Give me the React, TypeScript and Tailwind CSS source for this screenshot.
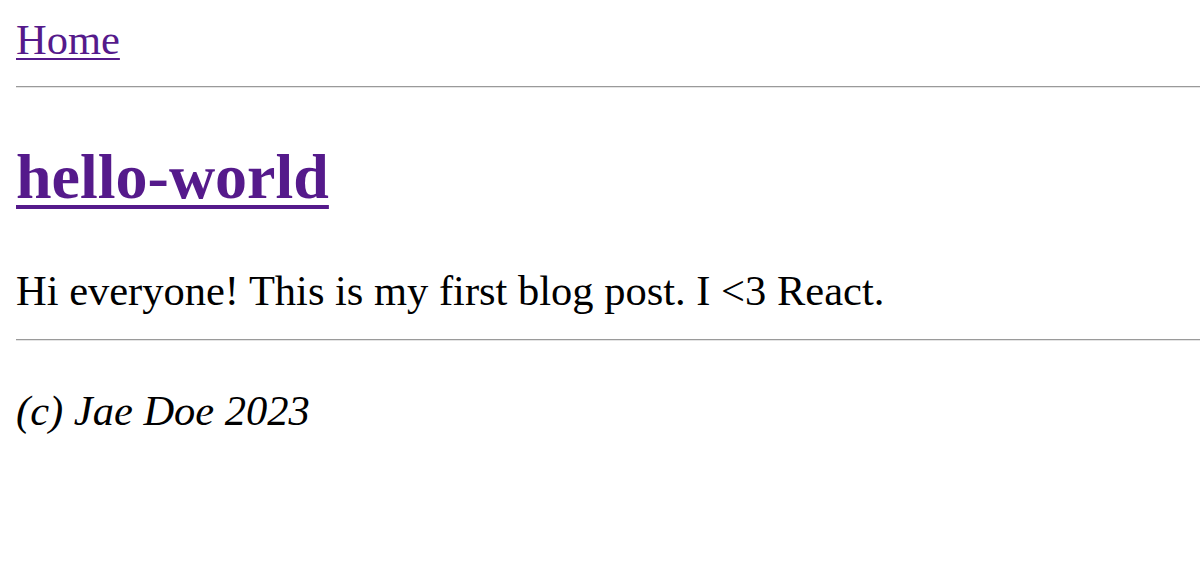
import React from 'react';

const Rule: React.FC<{ className?: string }> = ({ className = '' }) => (
  <hr className={`h-0 border-0 border-t border-b border-t-[#9a9a9a] border-b-[#e4e4e4] ${className}`} />
);

const App: React.FC = () => {
  return (
    <div className="min-h-[578px] bg-white pt-[15px] pl-4 font-['Liberation_Serif','Times_New_Roman',serif] text-black">
      <nav className="text-[42.5px] leading-[49px]">
        <a href="#" className="text-[#551a8b] underline decoration-2 underline-offset-[4px]">Home</a>
      </nav>
      <Rule className="mt-[22px]" />
      <main>
        <h1 className="mt-[52px] text-[64px] leading-[74px] font-bold">
          <a href="#" className="text-[#551a8b] underline decoration-4 underline-offset-[7px]">hello-world</a>
        </h1>
        <p className="mt-[52px] text-[42.5px] leading-[49px]">Hi everyone! This is my first blog post. I &lt;3 React.</p>
      </main>
      <Rule className="mt-[24px]" />
      <footer className="mt-[45px] text-[42.5px] leading-[49px] italic">(c) Jae Doe 2023</footer>
    </div>
  );
};

export default App;
